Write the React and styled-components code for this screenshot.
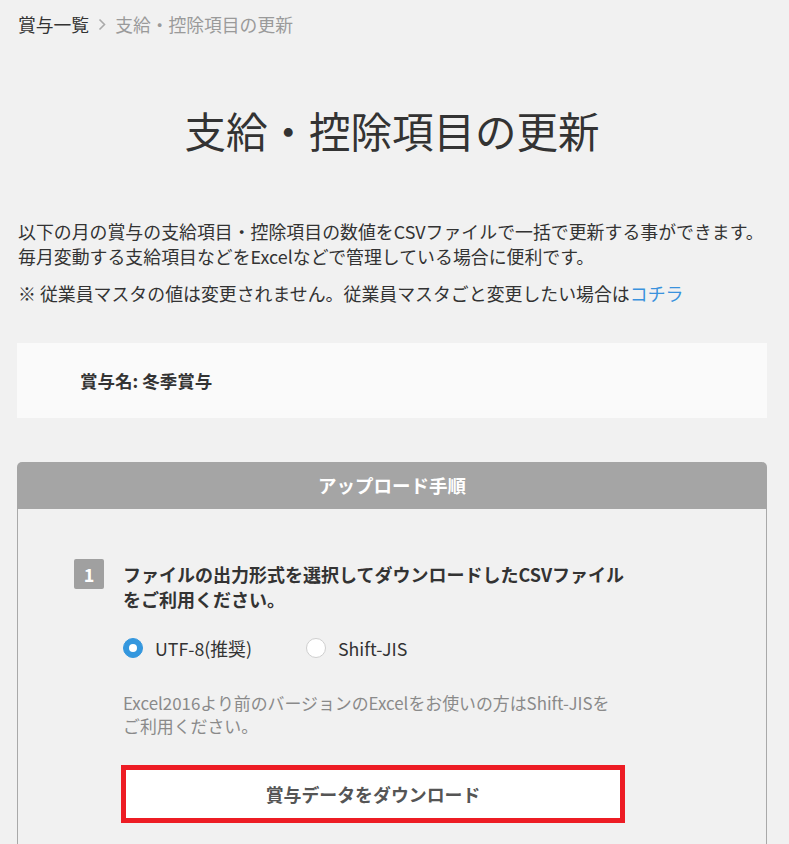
import React, { useState } from "react";
import styled, { createGlobalStyle } from "styled-components";

const GlobalStyle = createGlobalStyle`
  html, body {
    margin: 0;
    padding: 0;
    background: #f1f1f1;
  }
  body {
    font-family: "Noto Sans CJK JP", "Noto Sans", sans-serif;
    color: #333;
  }
`;

const Page = styled.div`
  padding: 12px 22px 0 17px;
  min-height: 844px;
  box-sizing: border-box;
`;

const Breadcrumb = styled.nav`
  display: flex;
  align-items: center;
  font-size: 17.8px;
  line-height: 25px;
  padding-left: 1px;
`;

const Crumb = styled.span`
  color: ${({ current }) => (current ? "#9a9a9a" : "#333")};
`;

const Chevron = styled.span`
  display: flex;
  align-items: center;
  margin: 0 9px 0 9px;
`;

const Title = styled.h1`
  margin: 64px 0 0;
  font-size: 41.5px;
  line-height: 58px;
  font-weight: 400;
  text-align: center;
  color: #333;
`;

const Lead = styled.p`
  margin: ${({ gap }) => gap}px 0 0 1px;
  font-size: 17.9px;
  line-height: 24.5px;
`;

const Link = styled.a`
  color: #3a92dd;
  text-decoration: none;
`;

const InfoBox = styled.div`
  margin-top: 37px;
  height: 75px;
  background: #fafafa;
  display: flex;
  align-items: center;
  padding-left: 63px;
  font-size: 17.5px;
  font-weight: 700;
`;

const Panel = styled.section`
  margin-top: 44px;
`;

const PanelHead = styled.div`
  height: 47px;
  background: #a5a5a5;
  border-radius: 5px 5px 0 0;
  color: #fff;
  font-weight: 700;
  font-size: 18.5px;
  display: flex;
  align-items: center;
  justify-content: center;
`;

const PanelBody = styled.div`
  border-left: 1px solid #a9a9a9;
  border-right: 1px solid #a9a9a9;
  padding: 50px 0 40px 56px;
`;

const Step = styled.div`
  display: flex;
  align-items: flex-start;
  gap: 19px;
`;

const Badge = styled.div`
  width: 30px;
  height: 30px;
  flex: none;
  border-radius: 2px;
  background: #a0a0a0;
  color: #fff;
  font-weight: 700;
  font-size: 18px;
  display: flex;
  align-items: center;
  justify-content: center;
`;

const StepContent = styled.div`
  width: 503px;
`;

const StepText = styled.div`
  margin-top: 3px;
  font-size: 18px;
  line-height: 25px;
  font-weight: 700;
  color: #333;
  white-space: nowrap;
`;

const Radios = styled.div`
  margin-top: 26px;
  display: flex;
  align-items: center;
  gap: 54px;
`;

const RadioLabel = styled.label`
  display: flex;
  align-items: center;
  gap: 12px;
  font-size: 17.8px;
  line-height: 20px;
  cursor: pointer;
`;

const RadioDot = styled.span`
  width: 20px;
  height: 20px;
  box-sizing: border-box;
  border-radius: 50%;
  flex: none;
  display: flex;
  align-items: center;
  justify-content: center;
  background: ${({ checked }) => (checked ? "#3497de" : "#fff")};
  border: 1px solid ${({ checked }) => (checked ? "#3497de" : "#cfcfcf")};
  &::after {
    content: "";
    width: 8px;
    height: 8px;
    border-radius: 50%;
    background: #fff;
    display: ${({ checked }) => (checked ? "block" : "none")};
  }
`;

const Note = styled.p`
  margin: 33px 0 0;
  font-size: 16.9px;
  line-height: 23px;
  color: #8a8a8a;
  white-space: nowrap;
`;

const DownloadButton = styled.button`
  margin: 28px 0 0 -2px;
  width: 504px;
  height: 58px;
  box-sizing: border-box;
  border: 5px solid #ed1c24;
  background: #fff;
  color: #555;
  font-family: inherit;
  font-weight: 700;
  font-size: 17.9px;
  cursor: pointer;
`;

const encodings = ["UTF-8(推奨)", "Shift-JIS"];

export default function App() {
  const [encoding, setEncoding] = useState(encodings[0]);

  return (
    <>
      <GlobalStyle />
      <Page>
        <Breadcrumb>
          <Crumb>賞与一覧</Crumb>
          <Chevron>
            <svg width="8" height="13" viewBox="0 0 8 13">
              <polyline points="1.5,1.5 6.5,6.5 1.5,11.5" fill="none" stroke="#aaa" strokeWidth="1.6" />
            </svg>
          </Chevron>
          <Crumb current>支給・控除項目の更新</Crumb>
        </Breadcrumb>

        <Title>支給・控除項目の更新</Title>

        <Lead gap={60}>
          以下の月の賞与の支給項目・控除項目の数値をCSVファイルで一括で更新する事ができます。
          <br />
          毎月変動する支給項目などをExcelなどで管理している場合に便利です。
        </Lead>
        <Lead gap={13}>
          ※ 従業員マスタの値は変更されません。従業員マスタごと変更したい場合は<Link href="#">コチラ</Link>
        </Lead>

        <InfoBox>賞与名: 冬季賞与</InfoBox>

        <Panel>
          <PanelHead>アップロード手順</PanelHead>
          <PanelBody>
            <Step>
              <Badge>1</Badge>
              <StepContent>
                <StepText>
                  ファイルの出力形式を選択してダウンロードしたCSVファイル
                  <br />
                  をご利用ください。
                </StepText>
                <Radios>
                  {encodings.map((e) => (
                    <RadioLabel key={e} onClick={() => setEncoding(e)}>
                      <RadioDot checked={encoding === e} />
                      {e}
                    </RadioLabel>
                  ))}
                </Radios>
                <Note>
                  Excel2016より前のバージョンのExcelをお使いの方はShift-JISを
                  <br />
                  ご利用ください。
                </Note>
                <DownloadButton>賞与データをダウンロード</DownloadButton>
              </StepContent>
            </Step>
          </PanelBody>
        </Panel>
      </Page>
    </>
  );
}
